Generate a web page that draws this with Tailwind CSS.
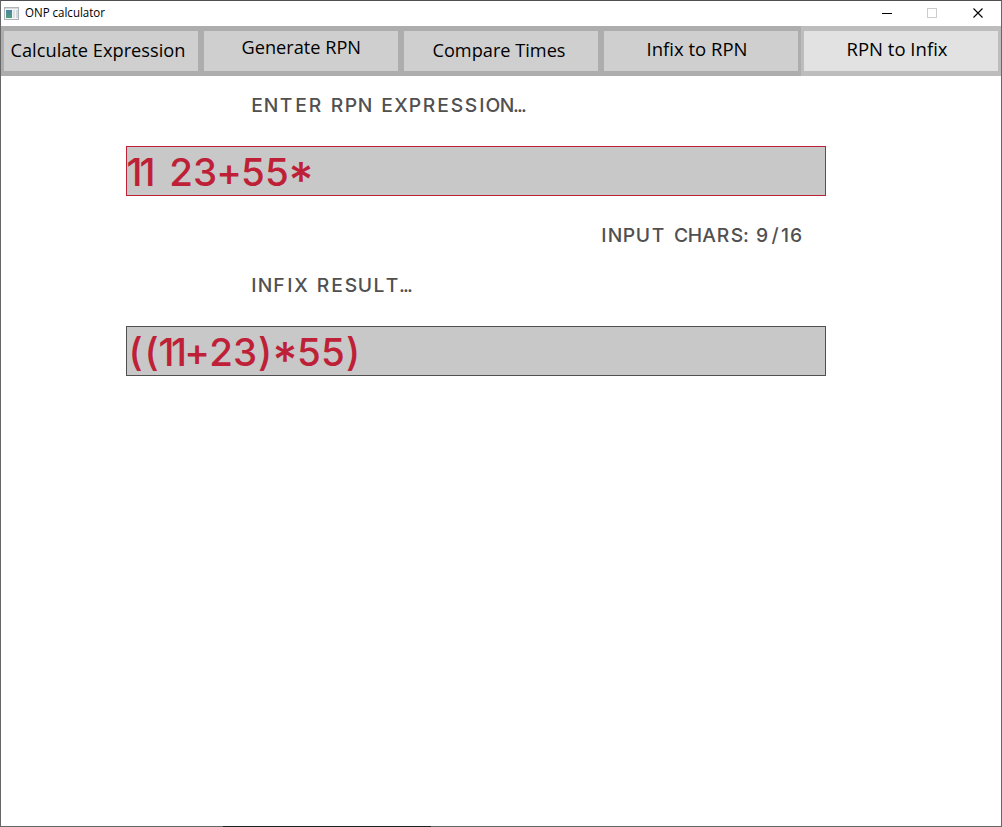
<!DOCTYPE html>
<html lang="en">
<head>
<meta charset="utf-8">
<title>ONP calculator</title>
<script src="https://cdn.jsdelivr.net/npm/@tailwindcss/browser@4"></script>
</head>
<body class="h-[827px] w-[1002px] overflow-hidden bg-white">
<div class="flex h-[827px] w-[1002px] flex-col border border-[#666] border-t-[#505052] bg-white">
  <header class="flex h-[25px] shrink-0 items-center">
    <svg class="ml-[3px] h-[14px] w-[15px] shrink-0" viewBox="0 0 15 14" shape-rendering="crispEdges">
      <defs><linearGradient id="pane" x1="0" y1="0" x2="0" y2="1"><stop offset="0" stop-color="#4d82a8"/><stop offset="1" stop-color="#4f9f78"/></linearGradient></defs>
      <rect x=".5" y=".5" width="14" height="12" fill="#f4f5f6" stroke="#adb3b6"/>
      <rect x="1" y="1" width="13" height="1" fill="#d5dadd"/>
      <rect x="2" y="3" width="6" height="8" fill="url(#pane)"/>
      <rect x="9" y="3" width="2" height="8" fill="#dce2e6"/>
      <rect x="12" y="3" width="2" height="8" fill="#d0dce0"/>
    </svg>
    <svg class="ml-1.5 h-[25px] w-[100px]" font-family="Open Sans, sans-serif" font-size="11.8"><text x="0" y="16" textLength="80" lengthAdjust="spacingAndGlyphs">ONP calculator</text></svg>
    <svg class="ml-auto h-[25px] w-[138px]" fill="none" shape-rendering="crispEdges">
      <path d="M19 12.5h10" stroke="#000"/>
      <rect x="64.5" y="7.5" width="9" height="9" stroke="#ccc"/>
      <path d="M110.500 7.500l9 9M119.500 7.500l-9 9" stroke="#000" shape-rendering="auto" stroke-width="1.1"/>
    </svg>
  </header>

  <nav class="grid h-[50px] shrink-0 grid-cols-5">
    <button class="border-x-[3px] border-y-[5px] border-[#adadad] bg-[#cfcfcf]"><svg class="block h-10 w-[194px]" font-family="Open Sans, sans-serif" font-size="18.3"><text x="6.5" y="26" textLength="175" lengthAdjust="spacingAndGlyphs">Calculate Expression</text></svg></button>
    <button class="border-x-[3px] border-y-[5px] border-[#adadad] bg-[#cfcfcf]"><svg class="block h-10 w-[194px]" font-family="Open Sans, sans-serif" font-size="18.3"><text x="37.5" y="23" textLength="119.5" lengthAdjust="spacingAndGlyphs">Generate RPN</text></svg></button>
    <button class="border-x-[3px] border-y-[5px] border-[#adadad] bg-[#cfcfcf]"><svg class="block h-10 w-[194px]" font-family="Open Sans, sans-serif" font-size="18.3"><text x="28.5" y="26" textLength="133" lengthAdjust="spacingAndGlyphs">Compare Times</text></svg></button>
    <button class="border-x-[3px] border-y-[5px] border-[#adadad] bg-[#cfcfcf]"><svg class="block h-10 w-[194px]" font-family="Open Sans, sans-serif" font-size="18.3"><text x="42.5" y="25" textLength="101" lengthAdjust="spacingAndGlyphs">Infix to RPN</text></svg></button>
    <button class="border-x-[3px] border-y-[5px] border-[#bdbdbd] bg-[#e2e2e2]"><svg class="block h-10 w-[194px]" font-family="Open Sans, sans-serif" font-size="18.3"><text x="42.5" y="25" textLength="101" lengthAdjust="spacingAndGlyphs">RPN to Infix</text></svg></button>
  </nav>

  <main class="flex flex-col pl-[125px] pt-[14px]">
    <svg class="ml-[124px] h-[30px] w-[300px] overflow-visible" font-family="Inter, sans-serif" font-size="19.3" font-weight="500" fill="#505050" text-anchor="middle">
      <text y="22" x="7 21 36 51 65 77 87 101 115 127 137 151 165 179 193 207 221 232 243 257 266 270 274">ENTER RPN EXPRESSION...</text>
    </svg>
    <div class="mt-[26px] h-[50px] w-[700px] border border-[#be2137] bg-[#c8c8c8]">
      <svg class="block h-12 w-[698px] overflow-visible" font-family="Inter, sans-serif" font-size="38.5" font-weight="500" fill="#be2137" text-anchor="middle">
        <text x="7.500 20.500 38 54 78 102 126 150" y="39">11 23+55<tspan x="174" y="50" font-size="48">*</tspan></text>
      </svg>
    </div>
    <svg class="ml-[474px] mt-[24px] h-[30px] w-[210px] overflow-visible" font-family="Inter, sans-serif" font-size="19.3" font-weight="500" fill="#505050" text-anchor="middle">
      <text y="22" x="4 15 29 43 58 70 81 95 109 123 137 146 152 162 175 185 196">INPUT CHARS: 9/16</text>
    </svg>
    <svg class="ml-[124px] mt-[20px] h-[30px] w-[300px] overflow-visible" font-family="Inter, sans-serif" font-size="19.3" font-weight="500" fill="#505050" text-anchor="middle">
      <text y="22" x="4 15 29 40 51 63 73 87 101 115 129 142 152 156 160">INFIX RESULT...</text>
    </svg>
    <div class="mt-[26px] h-[50px] w-[700px] border border-[#505050] bg-[#c8c8c8]">
      <svg class="block h-12 w-[698px] overflow-visible" font-family="Inter, sans-serif" font-size="38.5" font-weight="500" fill="#be2137" text-anchor="middle">
        <text x="8.500 24.500 39.500 52 70 94 118 138" y="39">((11+23)<tspan x="158" y="50" font-size="48">*</tspan><tspan x="182 206 226" y="39">55)</tspan></text>
      </svg>
    </div>
  </main>
  <div class="-mb-px ml-[222px] mt-auto h-px w-[208px] bg-[#202022]"></div>
</div>
</body>
</html>
